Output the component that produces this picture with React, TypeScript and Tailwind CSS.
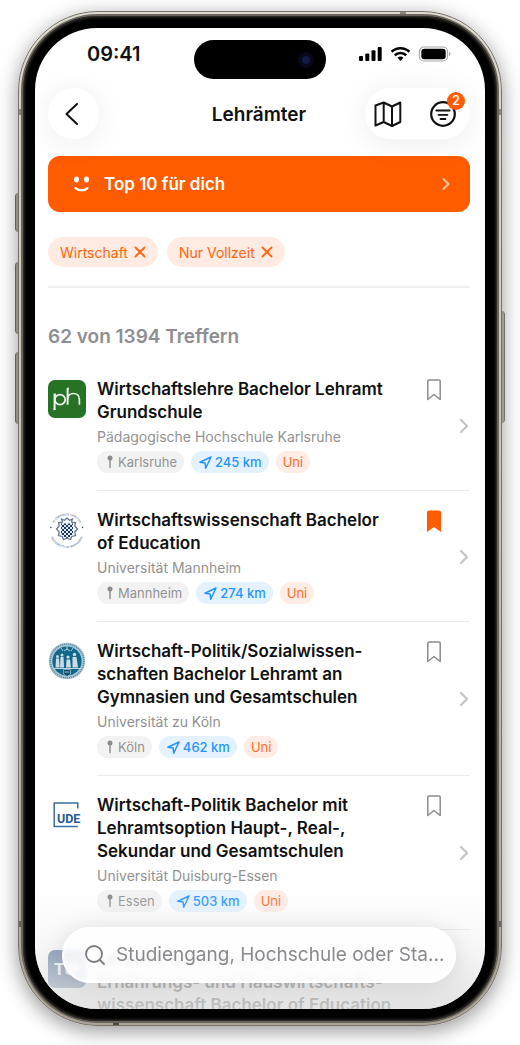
import React, { useState } from "react";
import { ChevronRight, Search, X } from "lucide-react";

type Course = {
    title: string[];
    school: string;
    city: string;
    distance: string;
    logo: React.ReactNode;
    saved?: boolean;
};

const PhLogo = () => (
    <svg viewBox="0 0 38 38" className="w-full h-full">
        <rect width="38" height="38" rx="7" fill="#267326" />
        <g fill="none" stroke="#f1f7f0" strokeWidth="1.7">
            <path d="M6.6 13.6V30" strokeWidth="2" />
            <ellipse cx="12" cy="19.6" rx="5.2" ry="5" />
            <path d="M19.6 8.5v16.2" strokeWidth="2" />
            <path d="M19.6 19.5c0-8 11.8-8 11.8 0v5.2" />
        </g>
        <path d="M5.6 14.5l2.2-1v2.4zM18.6 8l2.4-.4-1 4zM5.6 30.4V28l2.6 1z" fill="#f1f7f0" />
    </svg>
);

const MannheimLogo = () => (
    <svg viewBox="0 0 38 38" className="w-full h-full">
        <defs>
            <path id="ma-top" d="M4.2 19a14.6 14.600 0 0 1 29.2 0" />
            <path id="ma-bottom" d="M1.8 20a17 17 0 0 0 34 0" />
            <pattern id="ma-check" width="4" height="4" patternUnits="userSpaceOnUse">
                <rect width="4" height="4" fill="#dfe6ee" />
                <path d="M0 0h2v2H0zM2 2h2v2H2z" fill="#17375e" />
            </pattern>
        </defs>
        <g fill="#8494a9" fontFamily="Liberation Sans, sans-serif" fontSize="3" fontWeight="700" textAnchor="middle">
            <text><textPath href="#ma-top" startOffset="50%">IN OMNIBUS VERITAS</textPath></text>
            <text><textPath href="#ma-bottom" startOffset="50%">UNIVERSITY OF MANNHEIM</textPath></text>
        </g>
        <circle cx="2.8" cy="16.500" r=".8" fill="#304d70" />
        <circle cx="34.6" cy="16.500" r=".8" fill="#304d70" />
        <path
            d="M14.500 11l-1-3 3 1.300 2.500-2.300 2.500 2.300 3-1.300-1 3 4 .8-.7 3.200 2.700 3-2.700 3 .7 3.500-3.700.9-1.300 3.200-3.500-1.300-3.500 1.300-1.300-3.200-3.700-.9.7-3.500-2.700-3 2.700-3-.7-3.200z"
            fill="#f3f6f9"
            stroke="#5d7390"
            strokeWidth="1.200"
        />
        <path d="M13 12.500h12v9c0 3-3 4.500-6 5.500-3-1-6-2.500-6-5.500z" fill="url(#ma-check)" />
    </svg>
);

const KoelnLogo = () => (
    <svg viewBox="0 0 38 38" className="w-full h-full">
        <circle cx="19" cy="19" r="18.300" fill="#a9c6d2" />
        <circle cx="19" cy="19" r="16.800" fill="none" stroke="#5e93a9" strokeWidth="1.600" strokeDasharray="1.200 .9" />
        <circle cx="19" cy="19" r="14.600" fill="#11668a" />
        <path d="M13 6l2 3M25 6l-2 3M19 4v4M16 9l3-2 3 2" stroke="#d3e4eb" strokeWidth=".8" fill="none" />
        <g fill="#c9dde5">
            <circle cx="9.500" cy="14.500" r="1.500" />
            <path d="M8 16.500h3l.7 9H7.500z" />
            <circle cx="14" cy="13" r="1.500" />
            <path d="M12.500 15h3l.5 10.500h-4z" />
            <circle cx="20" cy="15" r="1.600" />
            <path d="M18.500 17.500h3.500l1 8h-5z" />
            <circle cx="26.500" cy="12.500" r="1.700" />
            <path d="M24.500 15h4l1.500 10.500h-5.500z" />
        </g>
        <path d="M5 26.500h28" stroke="#bfd7e0" strokeWidth="1" />
        <path d="M15.500 27.500h7v4.500l-3.500 2.500-3.500-2.500z" fill="#0a4e70" stroke="#bfd7e0" strokeWidth=".6" />
        <path d="M16.500 30h5" stroke="#bfd7e0" strokeWidth=".8" />
    </svg>
);

const UdeLogo = () => (
    <svg viewBox="0 0 38 38" className="w-full h-full">
        <path d="M29.800 12.500V7H6.200v23.500h23.600" fill="none" stroke="#3a6da6" strokeWidth="1.500" />
        <text x="9" y="26.500" fill="#1f5c9c" fontFamily="Roboto, sans-serif" fontSize="12.500" fontWeight="700">UDE</text>
    </svg>
);

const TuLogo = () => (
    <svg viewBox="0 0 38 38" className="w-full h-full">
        <defs>
            <linearGradient id="tu-bg" x1="0" y1="0" x2="0" y2="1">
                <stop offset="0" stopColor="#3d5f90" />
                <stop offset="1" stopColor="#6e88ac" />
            </linearGradient>
        </defs>
        <rect width="38" height="38" rx="7" fill="url(#tu-bg)" />
        <text x="6" y="25" fill="#fff" fontFamily="Roboto, sans-serif" fontSize="17" fontWeight="700">TU</text>
        <path d="M28 21l-4-3.500c-2-2 1-5 4-2 3-3 6 0 4 2z" fill="#fff" />
    </svg>
);

const courses: Course[] = [
    {
        title: ["Wirtschaftslehre Bachelor Lehramt", "Grundschule"],
        school: "Pädagogische Hochschule Karlsruhe",
        city: "Karlsruhe",
        distance: "245 km",
        logo: <PhLogo />,
    },
    {
        title: ["Wirtschaftswissenschaft Bachelor", "of Education"],
        school: "Universität Mannheim",
        city: "Mannheim",
        distance: "274 km",
        logo: <MannheimLogo />,
        saved: true,
    },
    {
        title: ["Wirtschaft-Politik/Sozialwissen-", "schaften Bachelor Lehramt an", "Gymnasien und Gesamtschulen"],
        school: "Universität zu Köln",
        city: "Köln",
        distance: "462 km",
        logo: <KoelnLogo />,
    },
    {
        title: ["Wirtschaft-Politik Bachelor mit", "Lehramtsoption Haupt-, Real-,", "Sekundar und Gesamtschulen"],
        school: "Universität Duisburg-Essen",
        city: "Essen",
        distance: "503 km",
        logo: <UdeLogo />,
    },
];

const StatusBar = () => (
    <div className="relative flex h-[52px] items-center justify-between pl-[52px] pr-[34px]">
        <span className="text-[20px] font-semibold leading-6">09:41</span>
        <div className="absolute left-1/2 top-3 flex h-[39px] w-[132px] -translate-x-1/2 items-center justify-end rounded-full bg-black pr-3">
            <div className="flex h-4 w-4 items-center justify-center rounded-full bg-[#080818]">
                <div className="h-2 w-2 rounded-full bg-[#121a4a]" />
            </div>
        </div>
        <svg width="92" height="16" viewBox="0 0 92 16">
            <rect x="0" y="10" width="4" height="5" rx="1" />
            <rect x="6.300" y="7.500" width="4" height="7.500" rx="1" />
            <rect x="12.500" y="4.300" width="4" height="10.700" rx="1" />
            <rect x="18.700" y="1" width="4" height="14" rx="1" />
            <g fill="none" stroke="#000" strokeWidth="2.600">
                <path d="M32.600 5.700a13 13 0 0 1 17.800 0" />
                <path d="M35.800 9.300a8.300 8.300 0 0 1 11.400 0" />
            </g>
            <path d="M41.500 15l-3-3.200a4.400 4.400 0 0 1 6 0z" />
            <rect x="60.500" y="1" width="28" height="14" rx="4.500" fill="none" stroke="#a8a8a8" strokeWidth="1.200" />
            <rect x="62.300" y="2.800" width="24.400" height="10.400" rx="3" />
            <path d="M90 5.800c2 .8 2 3.600 0 4.400z" fill="#a8a8a8" />
        </svg>
    </div>
);

const NavBar = () => (
    <header className="relative flex h-[51px] items-center justify-between">
        <button aria-label="Zurück" className="flex h-[51px] w-[51px] items-center justify-center rounded-full bg-white pr-[3px] shadow-[0_4px_32px_rgba(0,0,0,0.08)]">
            <svg width="14" height="22" viewBox="0 0 14 22" fill="none" stroke="#111" strokeWidth="2" strokeLinecap="round" strokeLinejoin="round">
                <path d="M12 1L1.500 11L12 21" />
            </svg>
        </button>
        <h1 className="absolute left-1/2 -translate-x-1/2 pt-[2px] text-[19px] font-semibold leading-6">Lehrämter</h1>
        <div className="flex h-[51px] w-[105px] items-center justify-between rounded-full bg-white pl-[9px] pr-[14px] shadow-[0_4px_32px_rgba(0,0,0,0.08)]">
            <button aria-label="Karte">
                <svg width="28" height="26" viewBox="0 0 28 26" fill="none" stroke="#111" strokeWidth="2" strokeLinejoin="round">
                    <path d="M1.500 4.500L9.700 1.500v19.500L1.500 24.500zM9.700 1.500l8.300 4v19.500l-8.300-4M18 5.500l8.300-4v19.500L18 25" />
                </svg>
            </button>
            <button aria-label="Filter" className="relative">
                <svg width="26" height="26" viewBox="0 0 26 26" fill="none" stroke="#111" strokeWidth="2.200" strokeLinecap="round">
                    <circle cx="13" cy="13" r="11.800" />
                    <path d="M6.300 9.500h13.400M8.500 13.800h9M10.500 18h5" strokeWidth="1.800" />
                </svg>
                <span className="absolute -right-[9px] -top-[9px] flex h-[18px] w-[18px] items-center justify-center rounded-full bg-[#ff5c00] text-[13px] font-medium leading-none text-white">
                    2
                </span>
            </button>
        </div>
    </header>
);

const FilterChip = ({ label, onRemove }: { label: string; onRemove: () => void }) => (
    <button onClick={onRemove} className="flex h-[30px] items-center gap-[3px] rounded-full bg-[#ffebe1] pl-3 pr-[9px] text-[14px] text-[#ff640f]">
        {label}
        <X size={18} strokeWidth={2.5} />
    </button>
);

const CourseRow = ({ course }: { course: Course }) => {
    const [saved, setSaved] = useState(!!course.saved);
    return (
        <li className="flex gap-[11px]">
            <div className="mt-5 h-[38px] w-[38px] shrink-0">{course.logo}</div>
            <div className="flex flex-1 border-b border-[#ebebeb] pt-[18px] pb-[17px]">
                <div className="min-w-0 flex-1">
                    <h2 className="whitespace-nowrap text-[17px] font-semibold leading-[23px] text-[#111]">
                        {course.title.map((line) => (
                            <span key={line} className="block">{line}</span>
                        ))}
                    </h2>
                    <p className="mt-[3px] text-[14px] leading-[19px] text-[#929292]">{course.school}</p>
                    <div className="mt-[5px] flex gap-[7px] text-[13px] leading-[22px]">
                        <span className="flex h-[22px] items-center gap-[3px] rounded-full bg-[#f2f2f2] pl-2 pr-[7px] text-[#929292]">
                            <svg width="10" height="14" viewBox="0 0 10 14" fill="#8a8a8a">
                                <circle cx="5" cy="3" r="2.500" />
                                <path d="M4.300 5h1.400v7.500L5 13.500l-.7-1z" />
                            </svg>
                            {course.city}
                        </span>
                        <span className="flex h-[22px] items-center gap-[3px] rounded-full bg-[#e4f2ff] pl-2 pr-[7px] font-medium text-[#2694ff]">
                            <svg width="13" height="13" viewBox="0 0 13 13" fill="none" stroke="currentColor" strokeWidth="1.500" strokeLinejoin="round">
                                <path d="M12 1L.9 6.300l5.200.7.6 5.200z" />
                            </svg>
                            {course.distance}
                        </span>
                        <span className="h-[22px] rounded-full bg-[#ffece4] px-[7px] text-[#ff6e26]">Uni</span>
                    </div>
                </div>
                <button aria-label="Merken" onClick={() => setSaved(!saved)} className="mt-[1px] self-start">
                    {saved ? (
                        <svg width="14" height="22" viewBox="0 0 14 22" fill="#ff5c00">
                            <path d="M2 .5h10a2 2 0 0 1 2 2V22l-7-5-7 5V2.500a2 2 0 0 1 2-2z" />
                        </svg>
                    ) : (
                        <svg width="14" height="22" viewBox="0 0 14 22" fill="none" stroke="#8c8c8f" strokeWidth="1.500" strokeLinejoin="round">
                            <path d="M2 1h10a1.200 1.200 0 0 1 1.200 1.200V20.500L7 15.500.8 20.500V2.200A1.200 1.200 0 0 1 2 1z" />
                        </svg>
                    )}
                </button>
                <ChevronRight size={24} strokeWidth={2.2} className="-mr-[6px] ml-[11px] self-center text-[#c4c4c6]" />
            </div>
        </li>
    );
};

const SearchBar = () => (
    <div className="absolute bottom-[26px] left-[27px] right-[29px] flex h-14 items-center gap-[9px] rounded-full border-2 border-white bg-white/85 pl-[19px] pr-2 shadow-[0_2px_24px_rgba(0,0,0,0.12)] backdrop-blur-[2px]">
        <Search size={24} strokeWidth={1.8} className="shrink-0 text-[#7c7c80]" />
        <input
            type="text"
            aria-label="Suche"
            placeholder="Studiengang, Hochschule oder Sta..."
            className="w-full min-w-0 bg-transparent text-[19px] outline-none placeholder:text-[#8a8a8e]"
        />
    </div>
);

export default function App() {
    const [filters, setFilters] = useState(["Wirtschaft", "Nur Vollzeit"]);
    return (
        <main className="h-screen bg-white px-[18px] pb-[19px] pt-[11px] font-['Inter',sans-serif] text-[#111]">
            <div className="relative h-full">
                {/* hardware buttons */}
                <div className="absolute -left-[3px] top-[182px] h-[39px] w-1 rounded-l border-l border-[#77736a] bg-[#b5b1a5]" />
                <div className="absolute -left-[3px] top-[251px] h-[72px] w-1 rounded-l border-l border-[#77736a] bg-[#b5b1a5]" />
                <div className="absolute -left-[3px] top-[341px] h-[72px] w-1 rounded-l border-l border-[#77736a] bg-[#b5b1a5]" />
                <div className="absolute -right-[3px] top-[300px] h-[112px] w-1 rounded-r border-r border-[#8b877c] bg-[#c5c1b4]" />

                <div className="relative h-full rounded-[80px] border border-[#77736a] bg-linear-to-b from-[#dedacf] to-[#aaa597] p-[2px] shadow-[0_5px_20px_rgba(0,0,0,0.42)]">
                    {/* antenna bands */}
                    <div className="absolute left-0 top-[97px] h-[6px] w-1 bg-[#8b877d]" />
                    <div className="absolute right-0 top-[97px] h-[6px] w-1 bg-[#8b877d]" />
                    <div className="absolute bottom-[98px] left-0 h-[6px] w-1 bg-[#6b675e]" />
                    <div className="absolute bottom-[98px] right-0 h-[6px] w-1 bg-[#6b675e]" />
                    <div className="absolute right-[95px] top-0 h-1 w-[6px] bg-[#8b877d]" />
                    <div className="absolute bottom-0 left-[94px] h-1 w-[6px] bg-[#4b483f]" />

                    <div className="relative h-full rounded-[77px] border-2 border-[#68645b] bg-black p-3 shadow-[inset_0_0_3px_1px_#45423c]">
                        <div className="relative h-full overflow-hidden rounded-[62px] bg-white">
                            <StatusBar />
                            <div className="pl-[13px] pr-[15px] pt-2">
                                <NavBar />

                                <button className="mt-[17px] flex h-14 w-full items-center rounded-[12px] bg-[#ff5c00] pl-[25px] pr-[14px] text-left text-white">
                                    <svg width="17" height="16" viewBox="0 0 17 16" fill="#fff">
                                        <ellipse cx="3.500" cy="3.500" rx="2.500" ry="3" />
                                        <ellipse cx="13.500" cy="3.500" rx="2.500" ry="3" />
                                        <path d="M2.500 12.200c3.500 3 8.500 3 12 0" fill="none" stroke="#fff" strokeWidth="2.200" strokeLinecap="round" />
                                    </svg>
                                    <span className="ml-[14px] flex-1 pt-[2px] text-[17px] font-semibold">Top 10 für dich</span>
                                    <ChevronRight size={20} strokeWidth={2.5} className="text-[#ffc3a0]" />
                                </button>

                                <div className="mt-[25px] flex h-[30px] gap-[9px]">
                                    {filters.map((filter) => (
                                        <FilterChip
                                            key={filter}
                                            label={filter}
                                            onRemove={() => setFilters(filters.filter((f) => f !== filter))}
                                        />
                                    ))}
                                </div>

                                <hr className="mt-[19px] border-t-2 border-[#f0f0f0]" />
                                <p className="mt-[37px] text-[19px] font-semibold leading-6 text-[#8e8e92]">62 von 1394 Treffern</p>

                                <ul className="mt-[11px]">
                                    {courses.map((course) => (
                                        <CourseRow key={course.school} course={course} />
                                    ))}
                                    <li className="flex gap-[11px]">
                                        <div className="mt-5 h-[38px] w-[38px] shrink-0">
                                            <TuLogo />
                                        </div>
                                        <h2 className="flex-1 whitespace-nowrap pt-[18px] text-[17px] font-semibold leading-[23px] text-[#555]">
                                            <span className="block">Lehramt Berufskolleg</span>
                                            <span className="block">Ernährungs- und Hauswirtschafts-</span>
                                            <span className="block">wissenschaft Bachelor of Education</span>
                                        </h2>
                                    </li>
                                </ul>
                            </div>
                            {/* fade behind the search bar */}
                            <div className="pointer-events-none absolute inset-x-0 bottom-0 h-[120px] bg-linear-to-b from-[#f0f0f0]/0 via-[#eeeeee]/50 via-50% to-[#dcdcdc]/80" />
                            <SearchBar />
                        </div>
                    </div>
                </div>
            </div>
        </main>
    );
}
